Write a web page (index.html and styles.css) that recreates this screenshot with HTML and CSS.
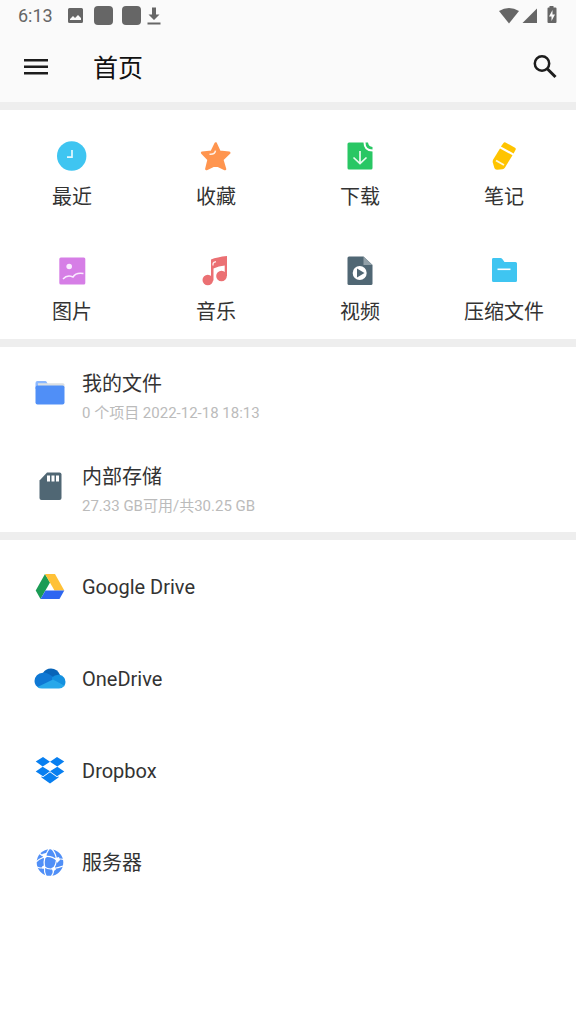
FILE: index.html
```html
<!DOCTYPE html>
<html lang="zh-CN">
<head>
<meta charset="utf-8">
<meta name="viewport" content="width=device-width, initial-scale=1">
<title>首页</title>
<link rel="stylesheet" href="styles.css">
</head>
<body>
<header class="top">
  <div class="status">
    <span class="clock">6:13</span>
    <svg class="status-left" width="94" height="20" viewBox="0 0 94 20" fill="#666">
      <path fill-rule="evenodd" d="M2.500 2h12q1.500 0 1.500 1.500v12q0 1.500-1.500 1.500h-12q-1.500 0-1.500-1.500v-12q0-1.500 1.500-1.500zM3 14h11v-2l-3-3-3 3-2-2-3 3z"/>
      <rect x="27" y="0" width="19" height="19" rx="4"/>
      <rect x="55" y="0" width="19" height="19" rx="4"/>
      <path d="M85 1.500h4v7h3.500l-5.500 5.500-5.500-5.500h3.500zM80.500 16.500h13v2h-13z"/>
    </svg>
    <svg class="status-right" width="60" height="20" viewBox="0 0 60 20" fill="#666">
      <path d="M1 5Q11-1 21 5L11 17.500z"/>
      <path d="M39 2.500v14.500h-14.500z"/>
      <path fill-rule="evenodd" d="M51.500 1.500v-1.500h4v1.500h2q1 0 1 1v13.500q0 1-1 1h-7q-1 0-1-1v-13.500q0-1 1-1zM54.500 4l-3.500 6.500h2.500v4.500l3.500-6.500h-2.500z"/>
    </svg>
  </div>
  <div class="toolbar">
    <button class="icon-button" aria-label="菜单">
      <svg width="24" height="18" viewBox="0 0 24 18" fill="#1c1c1c"><path d="M0 1h24v2.500h-24zM0 7.500h24v2.500h-24zM0 14h24v2.500h-24z"/></svg>
    </button>
    <h1 class="title">首页</h1>
    <button class="icon-button" aria-label="搜索">
      <svg width="24" height="24" viewBox="0 0 24 24" fill="none" stroke="#1c1c1c"><circle cx="9" cy="8.500" r="7.200" stroke-width="2.500"/><path d="M14.500 14l8 8" stroke-width="3"/></svg>
    </button>
  </div>
</header>
<main>
  <nav class="grid section" aria-label="分类">
    <a class="tile" href="#recent">
      <svg class="icon" viewBox="0 0 32 32"><circle cx="15.700" cy="16" r="14.700" fill="#3fc5f1"/><path d="M16 10v7.200h-5" fill="none" stroke="#e6f8fe" stroke-width="1.700"/></svg>
      <span>最近</span>
    </a>
    <a class="tile" href="#favorites">
      <svg class="icon" viewBox="0 0 32 32"><path d="M15.700 3.500l3.800 8.300 9.700 1-7 6.700 2.800 9.500-9.300-4.500-9.300 4.500 2.300-9.500-6.500-6.700 9.500-1z" fill="#ff954f" stroke="#ff954f" stroke-width="2.600" stroke-linejoin="round"/><path d="M9.500 14.200q5.500.5 6-3.500" fill="none" stroke="#fff0e6" stroke-width="1.500"/></svg>
      <span>收藏</span>
    </a>
    <a class="tile" href="#downloads">
      <svg class="icon" viewBox="0 0 32 32"><path d="M5 2.500h14.500q0 9 9 9v16.500q0 1.500-1.500 1.500h-22q-1.500 0-1.500-1.500v-24q0-1.500 1.500-1.500z" fill="#29c764"/><path d="M21.500 2.500h2.500q.5 4 4.500 4.500v2.500q-7 0-7-7z" fill="#29c764"/><path d="M16 11v12.500M9.500 17.500l6.500 6 6.500-6" fill="none" stroke="#e9faef" stroke-width="1.700"/></svg>
      <span>下载</span>
    </a>
    <a class="tile" href="#notes">
      <svg class="icon" viewBox="0 0 32 32" fill="#ffc400"><path d="M15.500 3q.7-1.200 2-.6l9.500 5.400q1.200.7.600 2l-2 3.600-12.700-6.900z"/><path d="M12 8.500l12.500 6.800-7.500 12.200q-1 1.500-2.500 1.700l-5.500.5q-2 0-2.600-1.700l-1.600-5.500q-.4-1.500.4-3z"/><path d="M8 20.500l8 4.500" stroke="#fff8d9" stroke-width="1.900"/></svg>
      <span>笔记</span>
    </a>
    <a class="tile" href="#pictures">
      <svg class="icon" viewBox="0 0 32 32"><rect x="3.300" y="2.500" width="26" height="27" rx="1.500" fill="#d67ee6"/><circle cx="13.200" cy="11.500" r="2.800" fill="#faebff"/><path d="M7 24q4-4.500 10-2 3-5 10.500-3.500" fill="none" stroke="#faebff" stroke-width="1.500"/></svg>
      <span>图片</span>
    </a>
    <a class="tile" href="#music">
      <svg class="icon" viewBox="0 0 32 32" fill="#eb7073"><circle cx="7.800" cy="25" r="5.300"/><circle cx="21.500" cy="21" r="5.300"/><path d="M11 4.500q6-2.500 16-3.500v20h-2.300v-10.500q-6 .5-11.200 3v12h-2.500z"/><path d="M13 10.500v-1.500q0-1.700 3-2.300" fill="none" stroke="#ffe9e9" stroke-width="1.300"/></svg>
      <span>音乐</span>
    </a>
    <a class="tile" href="#videos">
      <svg class="icon" viewBox="0 0 32 32"><path d="M5 1.500h14.500l9 8.500v18.500q0 1.500-1.500 1.500h-22q-1.500 0-1.500-1.500v-25.500q0-1.500 1.500-1.500z" fill="#506774"/><path d="M19.500 1.500l9 8.500h-9z" fill="#91a0a8"/><circle cx="15.700" cy="18" r="7" fill="#fff"/><path d="M13 13.500l7.500 4.500-7.500 4.500z" fill="#506774"/></svg>
      <span>视频</span>
    </a>
    <a class="tile" href="#archives">
      <svg class="icon" viewBox="0 0 32 32"><path d="M5 3h7.500q1 0 1.800 1l2.200 3h11q1.500 0 1.500 1.500v17q0 1.500-1.500 1.500h-22q-1.500 0-1.500-1.500v-21q0-1.500 1-1.500z" fill="#3fc5f1"/><path d="M9.500 14.300h13" stroke="#fff" stroke-width="1.600"/></svg>
      <span>压缩文件</span>
    </a>
  </nav>
  <section class="list section">
    <a class="row" href="#my-files">
      <svg class="icon" viewBox="0 0 32 32"><path d="M1.500 12v-6q0-2 2-2h8q1 0 1.500 1.500l1 2v5z" fill="#8bb8ff"/><path d="M4 6.300h25q1.500 0 1.500 1.500v3h-26.500z" fill="#dce0e2"/><rect x="1.500" y="8.500" width="29" height="19" rx="2" fill="#508ff7"/></svg>
      <span class="text"><span class="name">我的文件</span><span class="detail">0 个项目 2022-12-18 18:13</span></span>
    </a>
    <a class="row" href="#storage">
      <svg class="icon" viewBox="0 0 32 32"><path d="M13 2.500h12.500q2 0 2 2v23.500q0 2-2 2h-18q-2 0-2-2v-17.500z" fill="#506774"/><path d="M13 5.500h3v6h-3zM17.500 5.500h3v6h-3zM22 5.500h3v6h-3z" fill="#fff"/></svg>
      <span class="text"><span class="name">内部存储</span><span class="detail">27.33 GB可用/共30.25 GB</span></span>
    </a>
  </section>
  <section class="list cloud">
    <a class="row" href="#google-drive">
      <svg class="icon" viewBox="0 0 32 32"><path d="M11 4l5 8.500-9.500 16.500-4.800-8.500z" fill="#1b9c55"/><path d="M11 4h10l9.300 16.500h-9.800z" fill="#ffc137"/><path d="M11.500 20.500h18.800l-4.800 8.500h-19z" fill="#2d66f1"/></svg>
      <span class="name">Google Drive</span>
    </a>
    <a class="row" href="#onedrive">
      <svg class="icon" viewBox="0 0 32 32"><path d="M9 11q2.500-4.500 8-4.500 6.500 0 9 6.500l-6.500 5z" fill="#0864b8"/><path d="M9 10.700q3-.5 6 1.500l9 5.500-18.500 8.300q-5-2-5-7 .5-7.500 8.500-8.300z" fill="#0f78d4"/><path d="M18 15.500q3-3.200 7.500-2.700 6 1.700 6 7.200 0 2.500-1.500 4.500l-12-7z" fill="#1490df"/><path d="M3.500 25l15.500-7.500 11.500 6.300q-2 2.700-5.500 2.700h-17q-3 0-4.500-1.500z" fill="#28a8ea"/></svg>
      <span class="name">OneDrive</span>
    </a>
    <a class="row" href="#dropbox">
      <svg class="icon" viewBox="0 0 32 32" fill="#087ff0"><path d="M9 3l7 4.800-7.300 4.600-7-4.900zM23 3l7.300 4.500-7 4.900-7.300-4.600zM8.700 12.700l7.300 4.600-7 4.900-7.300-4.800zM23.300 12.700l7 4.700-7.300 4.800-7-4.900zM7.500 22.300l1.500.9 7-4.900 7 4.900 1.500-.9v1.300l-8.500 5.800-8.500-5.800z"/></svg>
      <span class="name">Dropbox</span>
    </a>
    <a class="row" href="#server">
      <svg class="icon" viewBox="0 0 32 32"><circle cx="16" cy="16.500" r="13.300" fill="#508ff7"/><path d="M11 10.500Q18 9.500 22.500 14 22 19 19.500 22.500 15 24 10.500 21 9.500 16 11 10.500zM11 10.500Q8 10 5 7M11 10.500Q13 6 15.500 2M11 10.500Q5 13 2 16M22.500 14Q22 7 17 2M22.500 14Q27 12 30 14M19.500 22.500Q24 22 29 20M19.500 22.500Q20 27 17 31M10.500 21Q7 23 3 21M10.500 21Q10 26 12 30" fill="none" stroke="#fff" stroke-width="1.200"/><g fill="#fff"><path d="M8 8l4-1 1 4-3 2z"/><path d="M21 12l4-1 1 3-3 3z"/><path d="M17.500 22l3-1.500 1.500 3-3 2z"/><path d="M8 20.500l3-1.500.5 3-3 1z"/></g></svg>
      <span class="name">服务器</span>
    </a>
  </section>
</main>
</body>
</html>
```
FILE: styles.css
```css
* {
  box-sizing: border-box;
}

body {
  margin: 0;
  background: #fff;
  color: #333;
  font-family: Roboto, "Noto Sans CJK SC", sans-serif;
  font-size: 20px;
  line-height: 28px;
}

a {
  color: inherit;
  text-decoration: none;
}

svg {
  display: block;
  flex: none;
}

.top {
  background: #fafafa;
  border-bottom: 8px solid #eee;
}

.status {
  display: flex;
  align-items: center;
  height: 32px;
  padding: 0 18px;
  color: #666;
  font-size: 18px;
}

.status-left {
  margin-left: 14px;
  overflow: visible;
}

.status-right {
  margin-left: auto;
}

.toolbar {
  display: flex;
  align-items: center;
  height: 70px;
  padding: 0 19px 0 24px;
}

.icon-button {
  display: flex;
  padding: 0;
  border: 0;
  background: none;
}

.title {
  flex: 1;
  margin: 0 0 0 45px;
  padding-top: 4px;
  color: #111;
  font-size: 25px;
  font-weight: 400;
  line-height: 36px;
}

.section {
  border-bottom: 8px solid #eee;
}

.grid {
  display: grid;
  grid-template-columns: repeat(4, 1fr);
  row-gap: 1px;
}

.tile {
  display: flex;
  flex-direction: column;
  align-items: center;
  gap: 11px;
  padding: 30px 0 13px;
}

.icon {
  width: 32px;
  height: 32px;
}

.list {
  display: flex;
  flex-direction: column;
  gap: 1px;
}

.cloud {
  gap: 0;
}

.row {
  display: flex;
  align-items: center;
  gap: 16px;
  min-height: 92px;
  padding: 0 34px;
}

.cloud .name {
  padding-top: 2px;
}

.text {
  display: flex;
  flex-direction: column;
  gap: 3px;
  padding-top: 8px;
}

.detail {
  color: #bbb;
  font-size: 15px;
  line-height: 24px;
}
```
